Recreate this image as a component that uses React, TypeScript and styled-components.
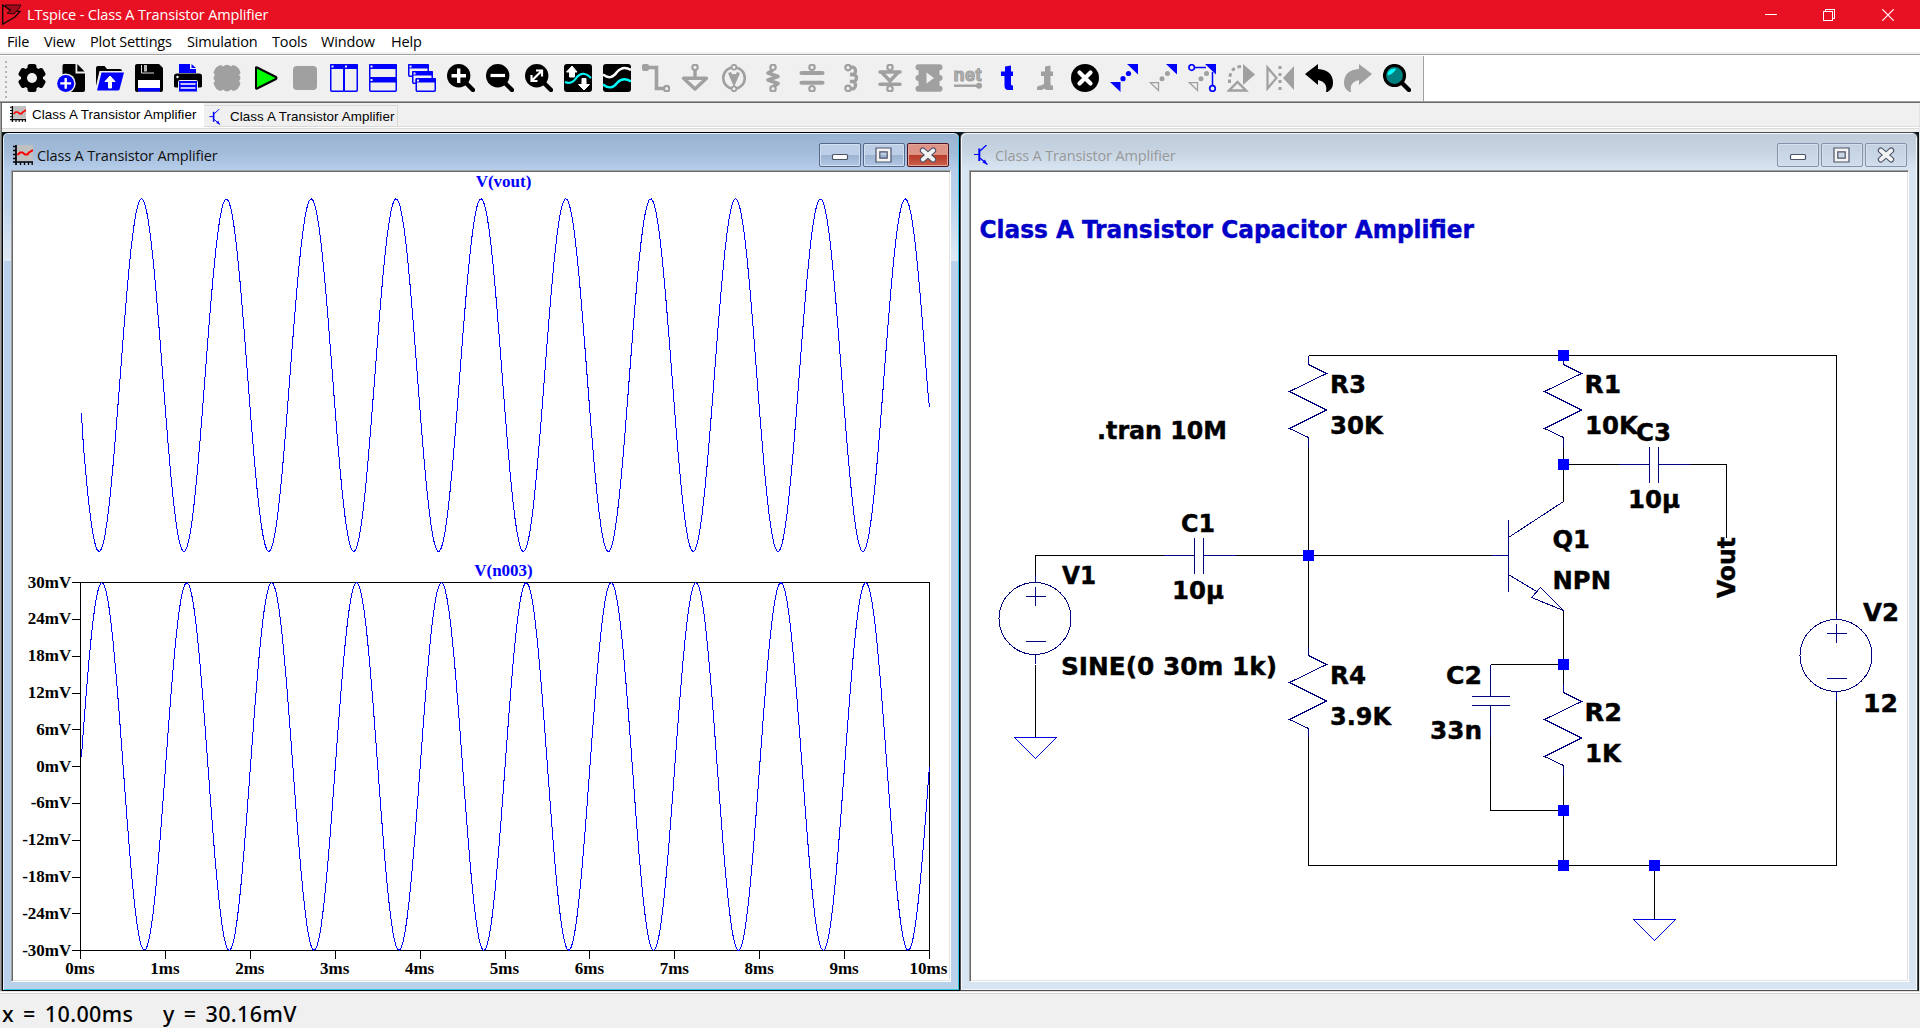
import React from 'react';
import styled, { createGlobalStyle } from 'styled-components';

const GlobalStyle = createGlobalStyle`
  body { margin: 0; background: #f0f0f0; overflow: hidden; }
  * { box-sizing: border-box; }
`;

const UI = `"Open Sans", "Noto Sans", sans-serif`;
const G = '#a0a0a0';
const B = '#0000ff';
const BG = '#f0f0f0';

const Screen = styled.div`
  width: 1920px;
  height: 1028px;
  display: flex;
  flex-direction: column;
  background: ${BG};
  font-family: ${UI};
  color: #000;
`;

const TitleBar = styled.header`
  height: 29px;
  flex: none;
  display: flex;
  align-items: center;
  background: #e81123;
  color: #fff;
  padding-left: 2px;
`;

const AppTitle = styled.h1`
  flex: 1;
  margin: 0 0 0 5px;
  font-size: 14.5px;
  font-weight: 400;
  line-height: 29px;
  letter-spacing: -0.15px;
  white-space: pre;
`;

const Captions = styled.div`
  display: flex;
  padding-right: 3px;
`;

const CaptionButton = styled.div`
  width: 58.4px;
  height: 29px;
  display: flex;
  align-items: center;
  justify-content: center;
`;

const MenuBar = styled.nav`
  height: 26px;
  flex: none;
  display: flex;
  gap: 14px;
  padding: 0 0 0 7px;
  background: #fff;
  box-shadow: inset 0 -1px 0 #a0a0a0, inset 0 -3px 0 #f0f0f0;
`;

const MenuItem = styled.span<{ $w: number }>`
  width: ${(p) => p.$w}px;
  font-size: 14.5px;
  line-height: 26px;
  letter-spacing: -0.15px;
  white-space: nowrap;
`;

const ToolbarRow = styled.div`
  height: 48px;
  flex: none;
  background: #fff;
  border-bottom: 1px solid #696969;
  box-shadow: inset 0 -1px 0 #a0a0a0;
  padding-bottom: 1px;
`;

const Toolbar = styled.div`
  width: 1424px;
  height: 45px;
  margin-top: 1px;
  display: flex;
  align-items: flex-start;
  gap: 11px;
  padding: 8px 0 0 18px;
  background: ${BG};
  border-right: 1px solid #a0a0a0;
  position: relative;
`;

const Grip = styled.div`
  position: absolute;
  left: 5px;
  top: 5px;
  width: 2px;
  height: 37px;
  background: repeating-linear-gradient(#b4b4b4 0 2px, transparent 2px 5px);
`;

const Workspace = styled.main`
  height: 888px;
  flex: none;
  border-left: 1px solid #a0a0a0;
  border-right: 1px solid #e3e3e3;
  box-shadow: inset 1px 0 0 #696969;
  display: flex;
  flex-direction: column;
  padding-left: 1px;
`;

const TabStrip = styled.div`
  height: 29px;
  flex: none;
  display: flex;
  align-items: flex-start;
  background: linear-gradient(${BG} 0 23px, #dcdcdc 23px 24px, #fff 24px 25px, #dcdcdc 25px 26px, ${BG} 26px);
`;

const Tab = styled.div<{ $active?: boolean }>`
  display: flex;
  align-items: center;
  width: ${(p) => (p.$active ? 202 : 194)}px;
  height: ${(p) => (p.$active ? 24 : 22)}px;
  margin-top: ${(p) => (p.$active ? 0 : 2)}px;
  padding: ${(p) => (p.$active ? '0 0 2px 8px' : '1px 0 0 5px')};
  gap: ${(p) => (p.$active ? 6 : 9)}px;
  background: ${(p) => (p.$active ? '#fff' : BG)};
  border: ${(p) => (p.$active ? 'none' : '1px solid #d9d9d9')};
  border-left: none;
  font: 13.4px "Liberation Sans", Arial, sans-serif;
  letter-spacing: 0.08px;
  white-space: nowrap;
`;

const Desktop = styled.div`
  flex: 1;
  display: flex;
  background: #06181c;
`;

const Frame = styled.section<{ $active?: boolean }>`
  width: 958px;
  height: 859px;
  border: 1px solid ${(p) => (p.$active ? '#000' : '#4c4c4c')};
  border-radius: 6px 6px 0 0;
  display: flex;
  flex-direction: column;
  padding: 1px 8px 8px;
  background: ${(p) =>
    p.$active
      ? 'linear-gradient(#98b3d1 0, #a3bcda 20px, #b5cde9 36px, #b9d1ea 60px, #dfe9f5 128px, #b9d1ea 128px)'
      : 'linear-gradient(#bfcddb 0, #c6d4e2 18px, #d7e4f2 36px)'};
  box-shadow: ${(p) =>
    p.$active
      ? 'inset 0 1px 0 #e4f2fa, inset 1px 0 0 #e4eefa, inset -1px -1px 0 #30c8e0'
      : 'inset 1px 1px 0 #f4f8fc, inset -1px -1px 0 #f4f8fc'};
`;

const WindowTitle = styled.div<{ $active?: boolean }>`
  height: 36px;
  flex: none;
  display: flex;
  align-items: center;
  gap: 4px;
  padding: 6px 2px 0;
  font-size: 14.5px;
  letter-spacing: -0.15px;
  color: ${(p) => (p.$active ? '#101010' : '#999')};
`;

const WindowName = styled.span`
  flex: 1;
  line-height: 20px;
  padding-top: 1px;
`;

const ButtonGroup = styled.div`
  display: flex;
  gap: 2px;
`;

const FrameButton = styled.div<{ $tone: 'active' | 'inactive' | 'close' }>`
  width: 42px;
  height: 24px;
  border-radius: 2px;
  display: flex;
  align-items: center;
  justify-content: center;
  border: 1px solid ${(p) => ({ active: '#56698a', inactive: '#8591ab', close: '#4c1320' })[p.$tone]};
  box-shadow: inset 0 0 0 1px ${(p) => ({ active: '#d2e0f0', inactive: '#d5e0ec', close: '#e3a79d' })[p.$tone]};
  background: ${(p) =>
    ({
      active: 'linear-gradient(#bccfe6 0 50%, #9bb3d0 50%, #b0c8e4)',
      inactive: 'linear-gradient(#c3d0df, #c9d6e5 50%, #cfdcea)',
      close: 'linear-gradient(#dd9386 0 50%, #b83a26 50%, #c9604c)',
    })[p.$tone]};
`;

const Client = styled.div`
  width: 940px;
  height: 812px;
  background: #fff;
  border: 1px solid;
  border-color: #a0a0a0 #fff #fff #a0a0a0;
  box-shadow: inset 1px 1px 0 #696969, inset -1px -1px 0 #e3e3e3;
  padding: 1px;
  svg { display: block; }
`;

const StatusBar = styled.footer`
  flex: 1;
  display: flex;
  gap: 28px;
  padding: 3px 0 0 2px;
  background: ${BG};
  box-shadow: inset 0 1px 0 #e3e3e3, inset 0 2px 0 #fff, inset 0 3px 0 #d4d4d4;
  font: 500 21.5px/40px "Noto Sans", "Open Sans", sans-serif;
  letter-spacing: 0.4px;
  word-spacing: 3px;
  white-space: pre;
`;

const Readout = styled.span<{ $w: number }>`
  width: ${(p) => p.$w}px;
`;

/* ---------- toolbar icons, drawn on a 28px grid ---------- */

const Ico = ({ children }: { children: React.ReactNode }) => (
  <svg width="28" height="28" viewBox="0 0 28 28" fill="none">
    {children}
  </svg>
);

const Pin = ({ x, y, c = G }: { x: number; y: number; c?: string }) => (
  <circle cx={x} cy={y} r="2.7" stroke={c} strokeWidth="2.2" fill={BG} />
);

const Lens = ({ children }: { children: React.ReactNode }) => (
  <Ico>
    <circle cx="11.7" cy="11.7" r="11.7" fill="#000" />
    <path d="M19 19L26 26" stroke="#000" strokeWidth="4.4" strokeLinecap="round" />
    {children}
  </Ico>
);

const Panel = ({ x, y, w, h, bar = 5 }: { x: number; y: number; w: number; h: number; bar?: number }) => (
  <>
    <rect x={x + 0.75} y={y + 0.75} width={w - 1.5} height={h - 1.5} rx="1" fill={BG} stroke={B} strokeWidth="1.5" />
    <rect x={x} y={y} width={w} height={bar} rx="1" fill={B} />
    <rect x={x + 1.5} y={y + 1.5} width="2" height="2" fill={BG} />
  </>
);

const icons: React.ReactNode[] = [
  <Ico>
    <circle cx="14" cy="14" r="11" fill="#000" />
    {[0, 60, 120].map((a) => (
      <rect key={a} x="9.5" y="0" width="9" height="28" rx="2.5" fill="#000" transform={`rotate(${a} 14 14)`} />
    ))}
    <circle cx="14" cy="14" r="5" fill={BG} />
  </Ico>,
  <Ico>
    <path d="M7 0H18.5V9.5H28V26Q28 28 26 28H7Q5.5 28 5.5 26V2Q5.5 0 7 0Z" fill="#000" />
    <path d="M20.3 0L27.6 7.6H20.3Z" fill="#000" />
    <circle cx="8.7" cy="19.4" r="10" fill={BG} />
    <circle cx="8.7" cy="19.4" r="8.5" fill={B} />
    <path d="M8.7 14V24.8M3.3 19.4H14.1" stroke="#fff" strokeWidth="2.4" />
  </Ico>,
  <Ico>
    <path d="M0 22V4Q0 2 2 2H8.5L11 5H24Q26 5 26 7H3.5Z" fill="#000" />
    <path d="M5.5 8.5H28L23.5 25.5Q23 26.5 22 26.5H1Z" fill={B} />
    <path d="M14 12L19 17.5H15.5V24H12.5V17.5H9Z" fill="#fff" stroke="#fff" />
  </Ico>,
  <Ico>
    <path d="M2 0H24L28 4V26Q28 28 26 28H2Q0 28 0 26V2Q0 0 2 0Z" fill="#000" />
    <path d="M6.5 1V9H19" stroke="#ddd" strokeWidth="1" />
    <rect x="9" y="1" width="3" height="6.500" fill="#bbb" />
    <rect x="3" y="16" width="22" height="11.5" fill="#fff" />
    <rect x="3" y="24" width="22" height="3.5" fill={B} />
  </Ico>,
  <Ico>
    <path d="M5 0H16V5H22V9H5Z" fill={B} />
    <path d="M17.5 0L22 4H17.5Z" fill={B} />
    <path d="M3 9.5H25Q28 9.5 28 12V22Q28 23.5 26 23.5H2Q0 23.5 0 22V12Q0 9.5 3 9.5Z" fill="#000" />
    <circle cx="3.5" cy="13" r="1.2" fill="#fff" />
    <rect x="4.5" y="16.5" width="19" height="11.5" rx="1" fill={B} stroke={BG} />
    <path d="M6.5 20H21.5M6.5 24H21.5" stroke="#fff" strokeWidth="1.6" />
  </Ico>,
  <Ico>
    <path
      d="M8 1L10 2.5Q14-1 18 2.5L20 1Q26 2 27.5 9L26 11Q29 14 26 17L27.5 19Q26 26 20 27L18 25.5Q14 29.5 10 25.5L8 27Q2 26 .5 19L2 17Q-1 14 2 11L.5 9Q2 2 8 1Z"
      fill={G}
    />
  </Ico>,
  <Ico>
    <path d="M4 3.500Q4 3 5 3.500L24 13Q25 14 24 15L5 24.500Q4 25 4 24Z" fill="#00ff00" stroke="#000" strokeWidth="2" strokeLinejoin="round" />
  </Ico>,
  <Ico>
    <rect x="2" y="2" width="24" height="24" rx="4" fill={G} />
  </Ico>,
  <Ico>
    <Panel x={0} y={0} w={14.5} h={28} />
    <Panel x={13.5} y={0} w={14.5} h={28} />
  </Ico>,
  <Ico>
    <Panel x={0} y={0} w={28} h={14.5} />
    <Panel x={0} y={13.5} w={28} h={14.5} />
  </Ico>,
  <Ico>
    <Panel x={0} y={0} w={21} h={13} bar={4.5} />
    <Panel x={4} y={7} w={21} h={13} bar={4.5} />
    <Panel x={7.5} y={14} w={20.5} h={14} bar={4.5} />
  </Ico>,
  <Lens>
    <path d="M11.700 4.500V19M4.500 11.700H19" stroke="#fff" strokeWidth="3.400" />
  </Lens>,
  <Lens>
    <path d="M4.500 11.500H19" stroke="#fff" strokeWidth="3.200" />
  </Lens>,
  <Lens>
    <path d="M7.500 16L16 7.500M11 6.500H17V12.500M6.500 11V17H12.500" stroke="#fff" strokeWidth="2.200" />
  </Lens>,
  <Ico>
    <rect width="28" height="28" rx="3" fill="#000" />
    <path d="M1 18Q8 21 13 13Q19 6 27 14" stroke="#00ffff" strokeWidth="2.200" />
    <path d="M8 2L13 8H10.500V13H5.500V8H2.500Z" fill="#fff" stroke="#fff" />
    <path d="M20 26L25.500 20.500H22V14.500H18V20.500H14.500Z" fill="#fff" stroke="#fff" />
  </Ico>,
  <Ico>
    <rect width="28" height="28" rx="3" fill="#000" />
    <path d="M0 10.500Q8 17 14 8Q20 1 28 6" stroke="#fff" strokeWidth="2.400" />
    <path d="M0 20.500Q8 27 14 19Q20 12.500 28 17.500" stroke="#00ffff" strokeWidth="2.400" />
  </Ico>,
  <Ico>
    <rect x="0" y="0" width="7" height="7" rx="2" fill={G} />
    <path d="M4 3.500H14.500V24.500H22" stroke={G} strokeWidth="3.600" />
    <Pin x={24.700} y={24.600} />
  </Ico>,
  <Ico>
    <path d="M14 6V14M2.500 14.300H25.500L14 25Z" stroke={G} strokeWidth="3.400" strokeLinejoin="round" />
    <Pin x={14} y={3.300} />
  </Ico>,
  <Ico>
    <circle cx="14" cy="14" r="10.800" stroke={G} strokeWidth="2.600" />
    <path d="M9.500 8.500L14 19L18.500 8.500M14 10V18" stroke={G} strokeWidth="3.200" />
    <circle cx="14" cy="3.200" r="2.400" stroke={G} strokeWidth="1.800" fill={BG} />
    <circle cx="14" cy="24.800" r="2.400" stroke={G} strokeWidth="1.800" fill={BG} />
  </Ico>,
  <Ico>
    <path d="M14 6L9 9L19 12.500L9 16L19 19.500L14 23" stroke={G} strokeWidth="3.600" strokeLinejoin="round" />
    <Pin x={14} y={3.300} />
    <Pin x={14} y={24.700} />
  </Ico>,
  <Ico>
    <path d="M3.500 9H24.500M3.500 18.700H24.500" stroke={G} strokeWidth="4" strokeLinecap="round" />
    <Pin x={14} y={3.300} />
    <Pin x={14} y={24.700} />
  </Ico>,
  <Ico>
    <path d="M13 3.500Q18 2 18.500 6.500Q19 11 13 10.500Q20 10.500 19.500 14Q19.500 18 13 17.500Q19 17 18.500 21.500Q18 26 13 24.500" stroke={G} strokeWidth="3.400" />
    <Pin x={11} y={3.600} />
    <Pin x={11} y={24.400} />
  </Ico>,
  <Ico>
    <path d="M4 8H24M5.500 8L14 17L22.500 8M4 20.300H24" stroke={G} strokeWidth="3.600" strokeLinecap="round" />
    <Pin x={14} y={3.300} />
    <Pin x={14} y={24.700} />
  </Ico>,
  <Ico>
    <rect x="3.500" y="2" width="21" height="24" fill={G} />
    <path d="M3.500 3.200H24.500M3.500 14H24.500M3.500 24.800H24.500" stroke={G} strokeWidth="6" strokeLinecap="round" />
    <path d="M11.500 8.500L19 14L11.500 19.500Z" fill={BG} />
  </Ico>,
  <Ico>
    <text x="-0.500" y="17" fontFamily="Liberation Sans, Arial, sans-serif" fontWeight="700" fontSize="18" textLength="28" fill="#b4b4b4" stroke={G} strokeWidth="1.200">
      net
    </text>
    <path d="M0 21.700H26" stroke={G} strokeWidth="2.400" />
    <circle cx="25" cy="21.700" r="3" fill={G} />
  </Ico>,
  <Ico>
    <path d="M12 2.500L18 1.500V7.500H20V12H18V20Q18 21.500 19.500 21.500H20V26H15.500Q11.500 26 11.500 21.500V12H8V7.500H12Z" fill={B} />
  </Ico>,
  <Ico>
    <path d="M13 2.500L18.500 1.500V7.500H21V12H18.500V20Q18.500 21.500 20 21.500H21V26H15.500Q14 26 12 24.500L10 26H5V23Q7 21 9 21.500L12 20V12H9V7.500H13Z" fill={G} />
  </Ico>,
  <Ico>
    <circle cx="14" cy="14" r="14" fill="#000" />
    <path d="M8.500 8.500L19.500 19.500M19.500 8.500L8.500 19.500" stroke="#fff" strokeWidth="4.200" strokeLinecap="round" />
  </Ico>,
  <Ico>
    <path d="M17 0H28V10.500ZM0 18H10.500V28Z" fill={B} />
    <circle cx="18.500" cy="9.500" r="2.600" fill={B} />
    <circle cx="13" cy="14.700" r="2.600" fill={B} />
  </Ico>,
  <Ico>
    <path d="M17 0H28V10.500Z" fill={B} />
    <path d="M1.500 18.700H9.500V26.500Z" stroke={G} strokeWidth="1.300" />
    <circle cx="18.500" cy="9.500" r="2.500" fill={G} />
    <circle cx="13" cy="14.700" r="2.500" fill={G} />
  </Ico>,
  <Ico>
    <path d="M17 0H28V10.500Z" fill={B} />
    <path d="M6 3.500H18M24.500 8V21" stroke={B} strokeWidth="1.500" />
    <path d="M1.500 18.700H9.500V26.500Z" stroke={G} strokeWidth="1.300" />
    <circle cx="18.500" cy="9.500" r="2.500" fill={G} />
    <circle cx="13" cy="14.700" r="2.500" fill={G} />
    <circle cx="3.700" cy="3.500" r="2.800" stroke={B} strokeWidth="1.700" fill={BG} />
    <circle cx="24.500" cy="24.500" r="2.800" stroke={B} strokeWidth="1.700" fill={BG} />
  </Ico>,
  <Ico>
    <path d="M16 0L28 10.500L16 21Z" fill={G} />
    <path d="M14 2.500Q2 3 2.500 19" stroke={G} strokeWidth="3" strokeDasharray="3.500 3" />
    <path d="M2 26.500L10.500 18L19 26.500Z" stroke={G} strokeWidth="2.400" />
  </Ico>,
  <Ico>
    <path d="M1.500 3.500L10.500 14L1.500 24.500Z" stroke={G} strokeWidth="2.200" />
    <path d="M28 2V26L17 14Z" fill={G} />
    <path d="M14 2V26" stroke={G} strokeWidth="3" strokeDasharray="3 4" />
  </Ico>,
  <Ico>
    <path d="M0 10L13 0V5Q28 6 28 19Q28 25 22.500 28H21Q23 18 13 16V21Z" fill="#000" />
  </Ico>,
  <Ico>
    <path d="M28 10L15 0V5Q0 6 0 19Q0 25 5.500 28H7Q5 18 15 16V21Z" fill={G} />
  </Ico>,
  <Ico>
    <circle cx="11.500" cy="11.500" r="10" fill="#008080" stroke="#000" strokeWidth="3.200" />
    <path d="M19 19L26 26" stroke="#000" strokeWidth="4.400" strokeLinecap="round" />
    <path d="M5 11Q5 5 12.500 5Q11 9 5 11Z" fill="#00ffff" stroke="#00ffff" />
  </Ico>,
];

const PlotIcon = ({ size }: { size: number }) => (
  <svg width={size} height={size} viewBox="0 0 20 20">
    <rect x="4" y="0" width="16" height="16" fill="#c0c0c0" />
    <path d="M3 0V20M0 17H20" stroke="#000" strokeWidth="1.700" />
    <path d="M0 1.500H3M0 5.500H3M0 9.500H3M0 13.500H3M7.500 17V20M11.500 17V20M15.500 17V20M19.200 17V20" stroke="#000" strokeWidth="1.300" />
    <path d="M4.500 10L7 7.500H9.500L12 9.500H14.500L16 7.500L20 5" stroke="#ff0000" strokeWidth="2" fill="none" />
  </svg>
);

const NpnIcon = ({ w, h }: { w: number; h: number }) => (
  <svg width={w} height={h} viewBox="0 0 14 20">
    <path d="M0 9.500H5M12.500 0L6 6M6 13L13.500 19.500" stroke={B} strokeWidth="1.200" fill="none" />
    <path d="M5.300 3.500V16" stroke={B} strokeWidth="2" />
    <path d="M13 19.500L8.500 17.500L11 14.500Z" fill={B} />
  </svg>
);

const Logo = () => (
  <svg width="20" height="22" viewBox="0 0 20 22">
    <path d="M.7 1L8 6L18 7.500L13 13L.7 20Z" fill="#e81123" stroke="#16060a" strokeWidth="1.400" />
    <path d="M3 1H19L16.500 5L12 10L5 9L9 6L4 3Z" fill="#a00c1b" stroke="#2a060a" strokeWidth="1" />
  </svg>
);

const MinGlyph = () => (
  <svg width="18" height="16" viewBox="0 0 18 16">
    <rect x="1.500" y="7.500" width="15" height="5" rx="1" fill="#fff" stroke="#4d5468" strokeWidth="1.200" />
  </svg>
);

const MaxGlyph = () => (
  <svg width="18" height="16" viewBox="0 0 18 16">
    <path d="M1 1H16V15H1ZM4.800 4.800V11.200H12.200V4.800Z" fill="#f4f4f4" fillRule="evenodd" stroke="#4d5468" strokeWidth="1.200" />
  </svg>
);

const CloseGlyph = () => (
  <svg width="20" height="18" viewBox="0 0 20 18">
    <path d="M4.800 4.500L15.200 13.500M15.200 4.500L4.800 13.500" stroke="#4d5468" strokeWidth="6" strokeLinecap="round" />
    <path d="M4.800 4.500L15.200 13.500M15.200 4.500L4.800 13.500" stroke="#f4f4f4" strokeWidth="3.800" strokeLinecap="round" />
  </svg>
);

/* ---------- waveform plot ---------- */

const PERIOD = 84.87;
const tracePoints = (fn: (x: number) => number, first?: number, last?: number) => {
  const pts: string[] = [];
  for (let x = 81; x <= 929; x += 2) {
    let y = fn(x);
    if (x === 81 && first) y = first;
    if (x === 929 && last) y = last;
    pts.push(`${x + 0.4},${y.toFixed(1)}`);
  }
  return pts.join(' ');
};
const voutTrace = tracePoints((x) => 375.2 - 176.5 * Math.cos((2 * Math.PI * (x - 141.1)) / PERIOD), 413, 407);
const n003Trace = tracePoints((x) => 766.5 - 184 * Math.sin((2 * Math.PI * (x - 80.3)) / PERIOD));

const yTicks = ['30mV', '24mV', '18mV', '12mV', '6mV', '0mV', '-6mV', '-12mV', '-18mV', '-24mV', '-30mV'];

const Plot = () => (
  <svg width="936" height="808" viewBox="13 172 936 808" fontFamily="Liberation Serif, Times New Roman, serif" fontWeight="700" fontSize="17">
    <g shapeRendering="crispEdges" fill="none" stroke="#000">
      <rect x="80.5" y="582.5" width="849" height="368" />
      {yTicks.map((t, i) => (
        <path key={t} d={`M72 ${Math.round(582.2 + 36.8 * i) + 0.5}H80`} />
      ))}
      {yTicks.map((_, i) => (
        <path key={i} d={`M${Math.round(80 + 84.9 * i) + 0.5} 950V959`} />
      ))}
      <polyline points={voutTrace} stroke={B} />
      <polyline points={n003Trace} stroke={B} />
    </g>
    {yTicks.map((t, i) => (
      <text key={t} x="71.3" y={Math.round(587.6 + 36.8 * i)} textAnchor="end">
        {t}
      </text>
    ))}
    {yTicks.map((_, i) => (
      <text key={i} x={80 + 84.9 * i - (i === 10 ? 0.5 : 0)} y="974" textAnchor="middle">
        {i}ms
      </text>
    ))}
    <g fill={B} textAnchor="middle">
      <text x="503.5" y="187">V(vout)</text>
      <text x="503.5" y="576">V(n003)</text>
    </g>
  </svg>
);

/* ---------- schematic ---------- */

const Resistor = ({ x, y }: { x: number; y: number }) => (
  <path d={`M${x} ${y - 9}V${y}l18 9l-37 18l37 18.500l-37 18.500l19 9v9`} />
);

const Source = ({ x, y, top }: { x: number; y: number; top: number }) => (
  <>
    <circle cx={x - 0.5} cy={y} r="36" />
    <path d={`M${x} ${top}V${y - 36}M${x} ${y + 36}v9M${x - 10} ${y - 22}h20M${x} ${y - 32}v19M${x - 10} ${y + 23}h20`} />
  </>
);

const junctions: [number, number][] = [
  [1563, 355],
  [1563, 464],
  [1308, 555],
  [1563, 664],
  [1563, 810],
  [1563, 865],
  [1654, 865],
];

const labels: [string, number, number, number][] = [
  ['R3', 1330, 1366, 393],
  ['30K', 1330, 1383, 434],
  ['.tran 10M', 1097, 1227, 439],
  ['C1', 1181, 1215, 532],
  ['10µ', 1172, 1224, 599],
  ['V1', 1062, 1096, 584],
  ['SINE(0 30m 1k)', 1061, 1277, 675],
  ['R4', 1330, 1366, 684],
  ['3.9K', 1330, 1391, 725],
  ['C2', 1446, 1482, 684],
  ['33n', 1430, 1482, 739],
  ['R2', 1584.5, 1622, 721],
  ['1K', 1585, 1621, 762],
  ['R1', 1584.5, 1621, 393],
  ['10K', 1585, 1638, 434],
  ['C3', 1636, 1671, 441],
  ['10µ', 1628, 1680, 508],
  ['Q1', 1552.5, 1590, 548],
  ['NPN', 1552.5, 1611, 589],
  ['V2', 1863, 1899, 621],
  ['12', 1863, 1898, 712],
];

const Schematic = () => (
  <svg width="936" height="808" viewBox="971 172 936 808" fontFamily="Tahoma, DejaVu Sans Condensed, DejaVu Sans, sans-serif" fontStretch="condensed" fontWeight="700" fontSize="25.400">
    <g transform="translate(.5 .5)" fill="none" shapeRendering="crispEdges">
      <path
        stroke="#000"
        d="M1308 355H1836V611M1836 700V865H1308V737M1308 446V647M1035 574V555H1163M1235 555H1491M1035 664V737M1563 446V501M1563 464H1618M1690 464H1726V537M1563 610V683M1563 664H1490M1490 737V810H1563M1563 773V865M1654 865V919"
      />
      <g stroke="#000080">
        <Resistor x={1308} y={364} />
        <Resistor x={1308} y={655} />
        <Resistor x={1563} y={364} />
        <Resistor x={1563} y={692} />
        <Source x={1035} y={618} top={574} />
        <Source x={1836} y={655} top={611} />
        <path d="M1163 555H1194M1203 555H1235M1194 537V573M1203 537V573" />
        <path d="M1618 464H1649M1658 464H1690M1649 446V482M1658 446V482" />
        <path d="M1490 664V696M1490 705V737M1471 696H1509M1471 705H1509" />
        <path d="M1491 555H1508M1508 519V591M1563 501L1508 537M1508 574L1536 591M1540 587L1531 597L1563 610L1540 587" />
      </g>
      <g stroke="#0000e0">
        <path d="M1014 737H1056L1035 758Z" />
        <path d="M1633 919H1675L1654 940Z" />
      </g>
    </g>
    <g fill={B}>
      {junctions.map(([x, y]) => (
        <rect key={`${x}-${y}`} x={x - 5} y={y - 5} width="11" height="11" />
      ))}
    </g>
    <g stroke="#000" strokeWidth="0.400">
      {labels.map(([t, x1, x2, y], i) => (
        <text key={i} x={x1} y={y - 0.4} textLength={x2 - x1} lengthAdjust="spacingAndGlyphs">
          {t}
        </text>
      ))}
      <text transform="translate(1734.500 598) rotate(-90)" textLength="61" lengthAdjust="spacingAndGlyphs">
        Vout
      </text>
    </g>
    <text x="979.5" y="237.600" textLength="494.500" lengthAdjust="spacingAndGlyphs" fill="#0000c8" stroke="#0000c8" strokeWidth="0.400">
      Class A Transistor Capacitor Amplifier
    </text>
  </svg>
);

type MdiProps = { active?: boolean; icon: React.ReactNode; children: React.ReactNode };

const MdiWindow = ({ active, icon, children }: MdiProps) => (
  <Frame $active={active}>
    <WindowTitle $active={active}>
      {icon}
      <WindowName>Class A Transistor Amplifier</WindowName>
      <ButtonGroup>
        <FrameButton $tone={active ? 'active' : 'inactive'}>
          <MinGlyph />
        </FrameButton>
        <FrameButton $tone={active ? 'active' : 'inactive'}>
          <MaxGlyph />
        </FrameButton>
        <FrameButton $tone={active ? 'close' : 'inactive'}>
          <CloseGlyph />
        </FrameButton>
      </ButtonGroup>
    </WindowTitle>
    <Client>{children}</Client>
  </Frame>
);

const menu: [string, number][] = [
  ['File', 23],
  ['View', 32],
  ['Plot Settings', 83],
  ['Simulation', 71],
  ['Tools', 35],
  ['Window', 56],
  ['Help', 32],
];

export default function App() {
  return (
    <Screen>
      <GlobalStyle />
      <TitleBar>
        <Logo />
        <AppTitle>LTspice - Class A Transistor Amplifier</AppTitle>
        <Captions>
          <CaptionButton>
            <svg width="12" height="12" shapeRendering="crispEdges">
              <path d="M0 5.500H12" stroke="#fff" />
            </svg>
          </CaptionButton>
          <CaptionButton>
            <svg width="12" height="12" fill="none" stroke="#fff" shapeRendering="crispEdges">
              <path d="M.5 2.500H9.500V11.500H.5ZM2.500 2.500V.5H11.500V9.500H9.500" />
            </svg>
          </CaptionButton>
          <CaptionButton>
            <svg width="12" height="12">
              <path d="M.3 .3L11.700 11.700M11.700 .3L.3 11.700" stroke="#fff" strokeWidth="1.200" />
            </svg>
          </CaptionButton>
        </Captions>
      </TitleBar>
      <MenuBar>
        {menu.map(([label, w]) => (
          <MenuItem key={label} $w={w}>
            {label}
          </MenuItem>
        ))}
      </MenuBar>
      <ToolbarRow>
        <Toolbar>
          <Grip />
          {icons.map((icon, i) => (
            <React.Fragment key={i}>{icon}</React.Fragment>
          ))}
        </Toolbar>
      </ToolbarRow>
      <Workspace>
        <TabStrip>
          <Tab $active>
            <PlotIcon size={16} />
            Class A Transistor Amplifier
          </Tab>
          <Tab>
            <NpnIcon w={12} h={16} />
            Class A Transistor Amplifier
          </Tab>
        </TabStrip>
        <Desktop>
          <MdiWindow active icon={<PlotIcon size={20} />}>
            <Plot />
          </MdiWindow>
          <MdiWindow icon={<NpnIcon w={20} h={20} />}>
            <Schematic />
          </MdiWindow>
        </Desktop>
      </Workspace>
      <StatusBar>
        <Readout $w={133}>x = 10.00ms</Readout>
        <Readout $w={140}>y = 30.16mV</Readout>
      </StatusBar>
    </Screen>
  );
}
